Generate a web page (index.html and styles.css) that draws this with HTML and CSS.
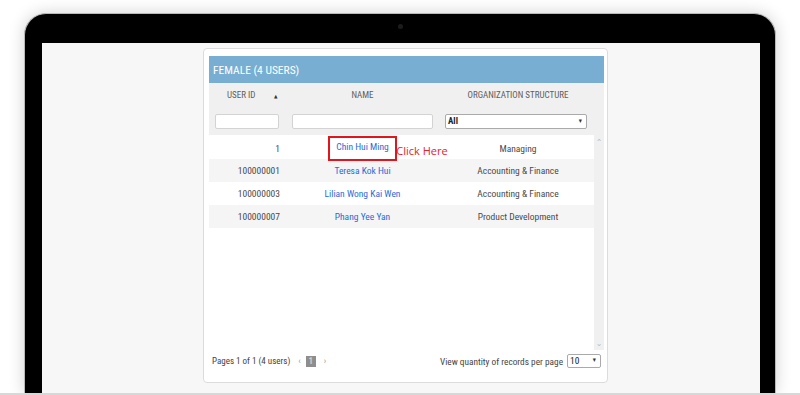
FILE: index.html
```html
<!DOCTYPE html>
<html>
<head>
<meta charset="utf-8">
<link rel="stylesheet" href="styles.css">
</head>
<body>
<div class="laptop">
  <div class="bezel-top"><span class="camera"></span></div>
  <div class="screen">
    <div class="panel">
      <div class="panel-title">FEMALE (4 USERS)</div>
      <div class="grid">
        <div class="thead">
          <div class="th th-id">USER ID <span class="sort">&#9650;</span></div>
          <div class="th">NAME</div>
          <div class="th">ORGANIZATION STRUCTURE</div>
          <div class="filter f-id"><span class="input"></span></div>
          <div class="filter f-name"><span class="input"></span></div>
          <div class="filter f-org"><span class="select">All<span class="caret">&#9662;</span></span></div>
        </div>
        <div class="tbody">
          <div class="rows">
            <div class="row">
              <div class="c-id">1</div>
              <div class="c-name"><span class="highlight"><a>Chin Hui Ming</a><span class="note">Click Here</span></span></div>
              <div class="c-org">Managing</div>
            </div>
            <div class="row alt">
              <div class="c-id">100000001</div>
              <div class="c-name"><a>Teresa Kok Hui</a></div>
              <div class="c-org">Accounting &amp; Finance</div>
            </div>
            <div class="row">
              <div class="c-id">100000003</div>
              <div class="c-name"><a>Lilian Wong Kai Wen</a></div>
              <div class="c-org">Accounting &amp; Finance</div>
            </div>
            <div class="row alt">
              <div class="c-id">100000007</div>
              <div class="c-name"><a>Phang Yee Yan</a></div>
              <div class="c-org">Product Development</div>
            </div>
          </div>
          <div class="scrollbar">
            <span class="arrow">&#8963;</span>
            <span class="arrow">&#8964;</span>
          </div>
        </div>
      </div>
      <div class="footer">
        <div class="pager">
          <span>Pages 1 of 1 (4 users)</span>
          <span class="nav">&lsaquo;</span>
          <span class="page">1</span>
          <span class="nav">&rsaquo;</span>
        </div>
        <div class="per-page">
          <span>View quantity of records per page</span>
          <span class="size-select">10<span class="caret">&#9662;</span></span>
        </div>
      </div>
    </div>
  </div>
</div>
<div class="base"></div>
</body>
</html>
```

FILE: styles.css
```css
html, body {
  margin: 0;
  padding: 0;
  background: #fff;
  overflow: hidden;
  width: 800px;
  height: 395px;
}
body {
  font-family: "Liberation Sans Narrow", "Roboto Condensed", "DejaVu Sans Condensed", sans-serif;
  color: #4a4a4a;
}
.laptop {
  margin: 13px 0 0 24px;
  width: 752px;
  height: 380px;
  box-sizing: border-box;
  background: #000;
  border: 1px solid #b9b9b9;
  border-bottom: none;
  border-radius: 22px 22px 0 0;
  box-shadow: 0 0 16px rgba(0,0,0,0.18);
  padding: 0 15px 0 17px;
}
.bezel-top {
  height: 29px;
  display: flex;
  justify-content: center;
  align-items: center;
}
.camera {
  width: 5px;
  height: 5px;
  border-radius: 50%;
  background: #1c1c1c;
  margin-left: -2px;
  margin-top: -4px;
}
.screen {
  background: #f7f7f7;
  height: 350px;
  padding-top: 5px;
  box-sizing: border-box;
}
.base {
  height: 2px;
  background: #d8d8d8;
}
.panel {
  margin-left: 161px;
  width: 405px;
  height: 335px;
  box-sizing: border-box;
  background: #fff;
  border: 1px solid #dcdcdc;
  border-radius: 4px;
  padding: 7px 3px 0 5px;
  display: flex;
  flex-direction: column;
}
.panel-title {
  height: 27px;
  line-height: 28px;
  background: #78aed1;
  color: #fff;
  font-size: 11.5px;
  padding-left: 4px;
}
.thead {
  background: #f0f0f0;
  display: grid;
  grid-template-columns: 76px 155px 154px 11px;
  grid-template-rows: 25px 27px;
}
.th {
  font-size: 9px;
  color: #5e5e5e;
  text-align: center;
  line-height: 25px;
}
.th-id {
  text-align: left;
  padding-left: 18px;
  position: relative;
}
.sort {
  font-size: 5px;
  color: #333;
  position: absolute;
  left: 65px;
  top: 1px;
}
.th:nth-child(3) {
  padding-left: 2px;
}
.filter {
  display: flex;
  align-items: flex-start;
  padding-top: 6px;
}
.filter.f-id { grid-column: 1; padding-left: 6px; padding-right: 6px; }
.filter.f-name { grid-column: 2; padding-left: 7px; padding-right: 7px; }
.filter.f-org { grid-column: 3; padding-left: 5px; padding-right: 7px; }
.input, .select {
  flex: 1;
  height: 13px;
  background: #fff;
  border: 1px solid #d3d3d3;
  border-radius: 2px;
}
.select {
  border-color: #aaa;
  font-size: 9px;
  color: #222;
  font-weight: bold;
  line-height: 13px;
  padding-left: 2px;
  display: flex;
  justify-content: space-between;
}
.caret {
  font-size: 7px;
  color: #333;
  padding-right: 4px;
}
.tbody {
  display: flex;
  height: 215px;
}
.rows {
  width: 385px;
  padding-top: 1px;
}
.row {
  display: grid;
  grid-template-columns: 76px 155px 154px;
  height: 23px;
  align-items: center;
  font-size: 9.5px;
  color: #4a4a4a;
}
.row.alt {
  background: #f5f5f5;
}
.c-id {
  text-align: right;
  padding-right: 5px;
}
.c-name {
  text-align: center;
  padding-left: 0;
}
.c-name a {
  color: #2a6bd6;
}
.c-org {
  text-align: center;
  padding-left: 2px;
}
.highlight {
  position: relative;
  display: inline-block;
}
.highlight a {
  display: inline-block;
  border: 2px solid #e3141b;
  padding: 3px 6px 7px 6px;
}
.note {
  position: absolute;
  left: 68px;
  top: 7px;
  white-space: nowrap;
  font-family: "Open Sans", "Liberation Sans", sans-serif;
  font-size: 11px;
  color: #e8202a;
}
.scrollbar {
  width: 10px;
  background: #f0f0f0;
  display: flex;
  flex-direction: column;
  justify-content: space-between;
  align-items: center;
  font-size: 8px;
  color: #bbb;
  font-family: "DejaVu Sans", sans-serif;
  padding: 3px 0 2px;
  box-sizing: border-box;
}
.footer {
  display: flex;
  justify-content: space-between;
  align-items: center;
  height: 22px;
  padding: 0 3px 0 3px;
  font-size: 9.3px;
  color: #444;
}
.pager {
  display: flex;
  align-items: center;
  font-size: 9px;
}
.nav {
  margin-left: 8px;
  color: #999;
  font-size: 9px;
}
.page {
  margin-left: 5px;
  background: #8e8e8e;
  color: #cfcfcf;
  font-weight: bold;
  width: 10px;
  height: 11px;
  line-height: 11px;
  text-align: center;
  font-size: 9px;
}
.per-page {
  display: flex;
  align-items: center;
}
.size-select {
  margin-left: 4px;
  width: 30px;
  height: 12px;
  border: 1px solid #aaa;
  border-radius: 2px;
  font-size: 9.5px;
  color: #222;
  line-height: 11px;
  padding-left: 2px;
  display: flex;
  justify-content: space-between;
  box-sizing: content-box;
}
```
